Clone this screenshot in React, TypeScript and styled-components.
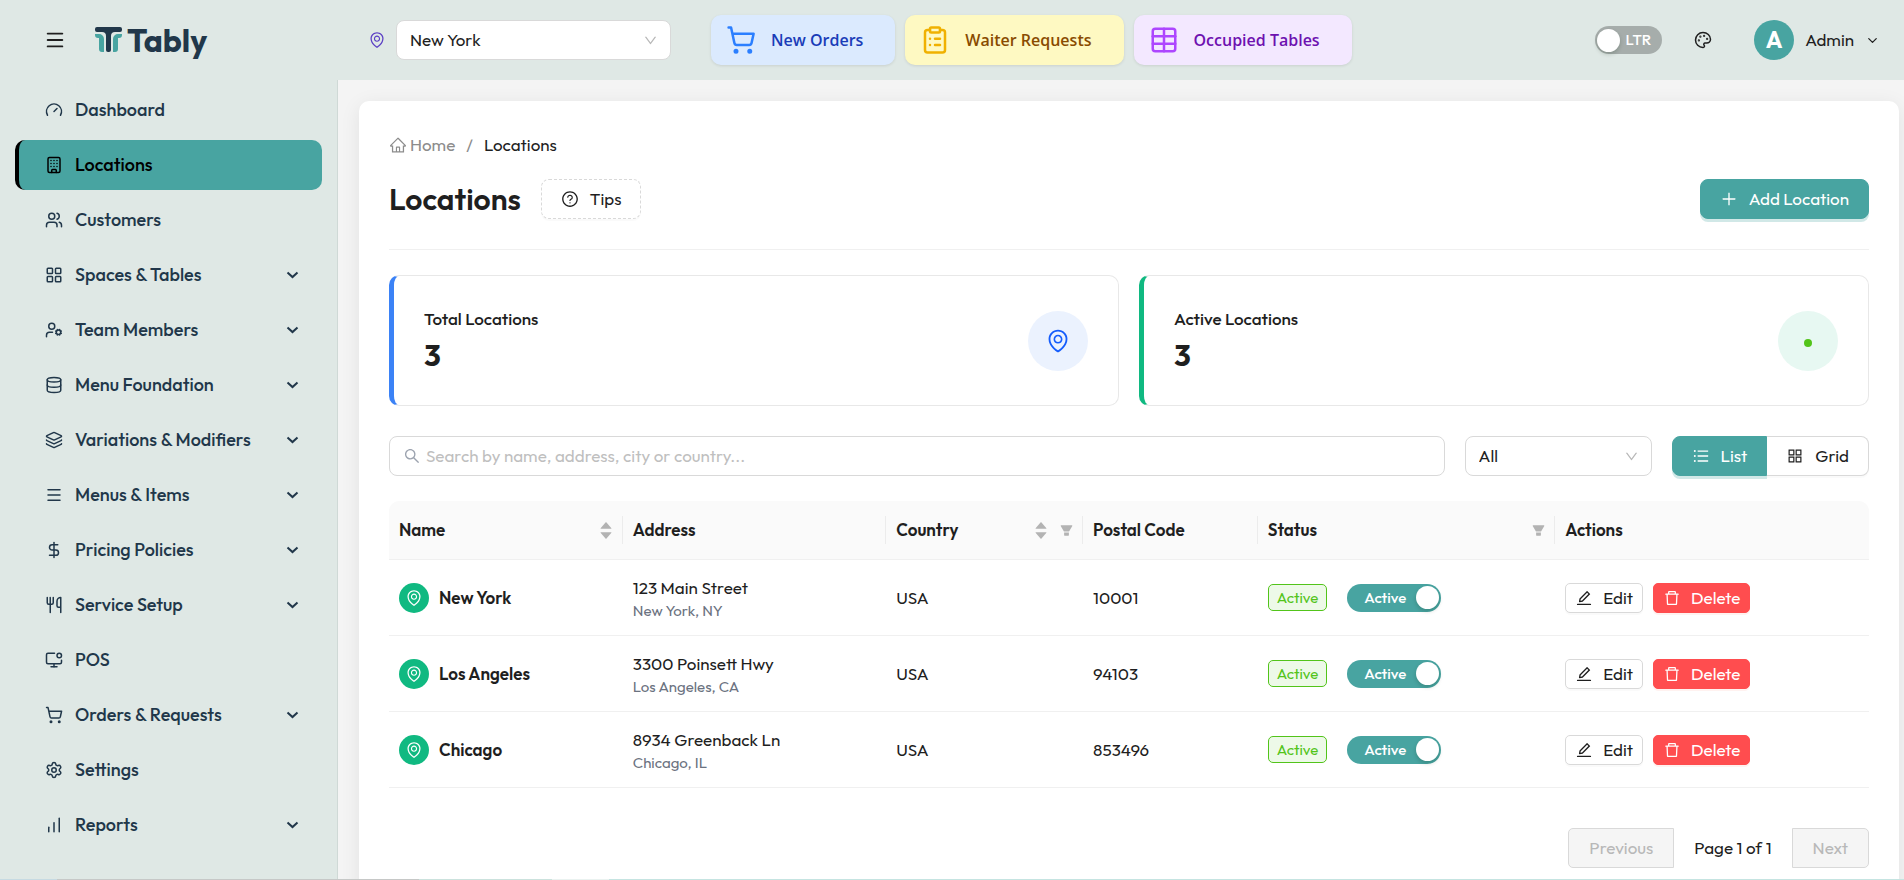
import React from "react";
import styled, { createGlobalStyle, css } from "styled-components";
import {
  Building,
  ChartNoAxesColumnIncreasing,
  ChevronDown,
  ClipboardList,
  Database,
  DollarSign,
  Gauge,
  Layers,
  LayoutGrid,
  Menu as MenuIcon,
  MonitorDot,
  Palette,
  Settings,
  ShoppingCart,
  Table as TableIcon,
  UserCog,
  Users,
  Utensils,
} from "lucide-react";
import {
  AiFillCaretDown,
  AiFillCaretUp,
  AiFillFilter,
  AiOutlineAppstore,
  AiOutlineDelete,
  AiOutlineDown,
  AiOutlineEdit,
  AiOutlineEnvironment,
  AiOutlineHome,
  AiOutlinePlus,
  AiOutlineQuestionCircle,
  AiOutlineSearch,
  AiOutlineUnorderedList,
} from "react-icons/ai";

const teal = "#48a4a1";
const navy = "#21374a";
const ink = "#1f1f1f";
const line = "#d9d9d9";
const hairline = "#f0f0f0";
const mist = "#dfe8e5";

const GlobalStyle = createGlobalStyle`
  *, *::before, *::after { box-sizing: border-box; }
  body {
    margin: 0;
    color: ${ink};
    background: #f4f4f4;
    font-family: Outfit, Lato, sans-serif;
    font-size: 17px;
    line-height: 26px;
  }
  button, input, select { font: inherit; color: inherit; }
  button { cursor: pointer; }
  svg { flex: none; display: block; }
`;

/* ---------- shell ---------- */

const Shell = styled.div`
  display: flex;
  flex-direction: column;
  height: 100vh;
  overflow: hidden;
`;

const Header = styled.header`
  display: flex;
  align-items: center;
  flex: none;
  height: 80px;
  padding: 0 24px 0 43px;
  background: ${mist};
`;

const Body = styled.div`
  display: flex;
  flex: 1;
  min-height: 0;
`;

const Sidebar = styled.nav`
  flex: none;
  width: 338px;
  padding: 5px 15px;
  background: ${mist};
  border-right: 1px solid #cfd9d6;
  overflow: hidden;
`;

const Main = styled.main`
  flex: 1;
  min-width: 0;
  padding: 21px 5px 20px 21px;
  overflow-y: auto;
  scrollbar-width: none;
`;

const Card = styled.section`
  padding: 30px;
  background: #fff;
  border-radius: 10px;
  box-shadow: 0 4px 20px rgba(0, 0, 0, 0.08);
`;

const BottomEdge = styled.div`
  position: fixed;
  inset: auto 0 0 0;
  height: 1px;
  background: linear-gradient(90deg, #c6dae2 0 3%, #c6c8c7 3% 22%, #cbe2dd 22% 29%, #eaf2f0 29% 32%, #c5e4e1 32%);
`;

/* ---------- header ---------- */

const IconButton = styled.button`
  display: flex;
  align-items: center;
  justify-content: center;
  width: 24px;
  height: 24px;
  padding: 0;
  border: 0;
  background: none;
`;

const Brand = styled.a`
  display: flex;
  align-items: center;
  gap: 5px;
  width: 240px;
  margin-left: 28px;
  color: ${navy};
  font-size: 32px;
  font-weight: 700;
  line-height: 40px;
  text-decoration: none;
`;

const LocationPicker = styled.label`
  display: flex;
  align-items: center;
  gap: 10px;
  margin-left: 33px;
  color: #5b3fc4;
`;

const SelectBox = styled.span<{ $width: number }>`
  display: grid;
  align-items: center;
  width: ${(p) => p.$width}px;
  height: 40px;
  color: #b8b8b8;
  > * { grid-area: 1 / 1; }
  svg { justify-self: end; margin-right: 13px; pointer-events: none; }
`;

const Select = styled.select`
  width: 100%;
  height: 100%;
  padding: 0 36px 0 13px;
  appearance: none;
  color: ${ink};
  background: #fff;
  border: 1px solid ${line};
  border-radius: 8px;
`;

const QuickLinks = styled.div`
  display: flex;
  gap: 10px;
  margin-left: 40px;
`;

const tones = {
  blue: { bg: "#dbeafe", text: "#193cb8", icon: "#2b7fff" },
  yellow: { bg: "#fef9c2", text: "#894b00", icon: "#f0b100" },
  purple: { bg: "#f3e8ff", text: "#6e11b0", icon: "#ad46ff" },
};

const QuickLink = styled.button<{ $tone: keyof typeof tones }>`
  display: flex;
  align-items: center;
  gap: 15px;
  height: 50px;
  padding: 0 32px 0 15px;
  border: 0;
  border-radius: 10px;
  font-family: "Open Sans", "Noto Sans", sans-serif;
  font-size: 16px;
  font-weight: 600;
  white-space: nowrap;
  color: ${(p) => tones[p.$tone].text};
  background: ${(p) => tones[p.$tone].bg};
  box-shadow: 0 1px 3px rgba(0, 0, 0, 0.1);
  svg { color: ${(p) => tones[p.$tone].icon}; }
`;

const HeaderTools = styled.div`
  display: flex;
  align-items: center;
  margin-left: auto;
  gap: 29px;
`;

const Account = styled.button`
  display: flex;
  align-items: center;
  gap: 11px;
  margin-left: 10px;
  padding: 0;
  border: 0;
  background: none;
`;

const Avatar = styled.span`
  width: 40px;
  height: 40px;
  border-radius: 50%;
  color: #fff;
  background: ${teal};
  font-size: 23px;
  font-weight: 700;
  line-height: 40px;
  text-align: center;
`;

/* ---------- switch ---------- */

const SwitchLabel = styled.label<{ $on: boolean }>`
  display: flex;
  align-items: center;
  justify-content: space-between;
  flex-direction: ${(p) => (p.$on ? "row" : "row-reverse")};
  width: ${(p) => (p.$on ? 94 : 67)}px;
  height: 28px;
  padding: ${(p) => (p.$on ? "0 2px 0 17px" : "0 11px 0 2px")};
  border-radius: 14px;
  color: #fff;
  background: ${(p) => (p.$on ? teal : "#a6adab")};
  font-size: 15px;
  font-weight: 500;
  cursor: pointer;
`;

const SwitchInput = styled.input`
  appearance: none;
  width: 23px;
  height: 23px;
  margin: 0;
  border-radius: 50%;
  background: #fff;
  box-shadow: 0 2px 4px rgba(0, 35, 11, 0.2);
`;

/* ---------- sidebar ---------- */

const NavList = styled.ul`
  display: grid;
  gap: 5px;
  margin: 0;
  padding: 0;
  list-style: none;
`;

const NavLink = styled.a<{ $active?: boolean }>`
  display: flex;
  align-items: center;
  height: 50px;
  padding: 0 23px 0 26px;
  border-left: 4px solid transparent;
  border-radius: 10px;
  color: ${navy};
  font-size: 18px;
  font-weight: 500;
  text-decoration: none;
  ${(p) =>
    p.$active &&
    css`
      color: #000;
      background: ${teal};
      border-left-color: #000;
    `}
`;

const NavText = styled.span`
  flex: 1;
  margin-left: 12px;
`;

/* ---------- page head ---------- */

const Breadcrumb = styled.ol`
  display: flex;
  gap: 11px;
  margin: 0;
  padding: 0;
  list-style: none;
  line-height: 28px;
  color: #8c8c8c;
`;

const HomeLink = styled.a`
  display: flex;
  align-items: center;
  gap: 3px;
  color: inherit;
  text-decoration: none;
`;

const Current = styled.span`
  color: ${ink};
`;

const TitleBar = styled.div`
  display: flex;
  align-items: center;
  gap: 20px;
  padding: 20px 0 30px;
  margin-bottom: 25px;
  border-bottom: 1px solid ${hairline};
`;

const Title = styled.h1`
  margin: 0;
  font-size: 30px;
  font-weight: 600;
  line-height: 40px;
`;

const Button = styled.button<{ $kind?: "primary" | "dashed" | "danger"; $small?: boolean }>`
  display: flex;
  align-items: center;
  justify-content: center;
  gap: ${(p) => (p.$small ? 10 : 11)}px;
  height: ${(p) => (p.$small ? 30 : 40)}px;
  padding: 0 ${(p) => (p.$small ? 9 : 19)}px;
  border: 1px solid ${line};
  border-radius: ${(p) => (p.$small ? 5 : 8)}px;
  background: #fff;
  box-shadow: 0 2px 0 rgba(0, 0, 0, 0.02);
  white-space: nowrap;
  ${(p) => p.$kind === "dashed" && "border-style: dashed;"}
  ${(p) =>
    p.$kind === "primary" &&
    css`
      color: #fff;
      background: ${teal};
      border-color: ${teal};
      box-shadow: 0 3px 0 rgba(72, 164, 161, 0.25);
    `}
  ${(p) =>
    p.$kind === "danger" &&
    css`
      color: #fff;
      background: #ff4d4f;
      border-color: #ff4d4f;
      box-shadow: 0 2px 0 rgba(255, 38, 5, 0.06);
    `}
`;

const TitleAction = styled.div`
  margin-left: auto;
`;

/* ---------- stats ---------- */

const Stats = styled.div`
  display: grid;
  grid-template-columns: 1fr 1fr;
  gap: 20px;
`;

const Stat = styled.article<{ $accent: string }>`
  display: flex;
  align-items: center;
  justify-content: space-between;
  height: 131px;
  padding: 0 30px;
  border: 1px solid #e8e8e8;
  border-left: 5px solid ${(p) => p.$accent};
  border-radius: 10px;
`;

const StatLabel = styled.h2`
  margin: 0;
  font-size: 17px;
  font-weight: 500;
  line-height: 28px;
`;

const StatValue = styled.p`
  margin: 0;
  font-size: 30px;
  font-weight: 700;
  line-height: 44px;
`;

const Disc = styled.span<{ $size: number; $bg: string; $color: string }>`
  display: flex;
  flex: none;
  align-items: center;
  justify-content: center;
  width: ${(p) => p.$size}px;
  height: ${(p) => p.$size}px;
  border-radius: 50%;
  color: ${(p) => p.$color};
  background: ${(p) => p.$bg};
`;

const Dot = styled.i`
  width: 8px;
  height: 8px;
  margin-top: 4px;
  border-radius: 50%;
  background: #52c41a;
`;

/* ---------- filters ---------- */

const Filters = styled.div`
  display: flex;
  gap: 20px;
  margin: 30px 0 25px;
`;

const SearchBox = styled.label`
  display: flex;
  align-items: center;
  gap: 5px;
  flex: 1;
  height: 40px;
  padding: 0 13px;
  border: 1px solid ${line};
  border-radius: 8px;
  color: #9ca3af;
`;

const SearchInput = styled.input`
  flex: 1;
  min-width: 0;
  padding: 0;
  border: 0;
  outline: 0;
  background: none;
  color: ${ink};
  &::placeholder { color: #bfbfbf; opacity: 1; }
`;

const Segmented = styled.div`
  display: flex;
  ${Button}:first-child { border-radius: 8px 0 0 8px; }
  ${Button}:last-child { border-radius: 0 8px 8px 0; border-left: 0; }
`;

/* ---------- table ---------- */

const DataTable = styled.table`
  width: 100%;
  border-collapse: separate;
  border-spacing: 0;
  table-layout: fixed;
  text-align: left;
`;

const Col = styled.col<{ $share: number }>`
  width: ${(p) => p.$share}%;
`;

const HeadCell = styled.th`
  height: 59px;
  padding: 0;
  background: #fafafa;
  border-bottom: 1px solid ${hairline};
  font-weight: 600;
  &:first-child { border-top-left-radius: 10px; }
  &:last-child { border-top-right-radius: 10px; }
`;

const HeadInner = styled.div<{ $last: boolean }>`
  display: flex;
  align-items: center;
  gap: 10px;
  height: 28px;
  padding: 0 8px 0 10px;
  border-right: 1px solid ${(p) => (p.$last ? "transparent" : "#ececec")};
  color: #b3b3b3;
`;

const HeadText = styled.span`
  flex: 1;
  color: ${ink};
`;

const Sorter = styled.span`
  display: grid;
  gap: 1px;
  svg { height: 9px; }
`;

const Cell = styled.td`
  height: 76px;
  padding: 0 10px;
  border-bottom: 1px solid ${hairline};
`;

const Inline = styled.div<{ $gap: number }>`
  display: flex;
  align-items: center;
  gap: ${(p) => p.$gap}px;
`;

const Name = styled.span`
  font-weight: 600;
`;

const SubText = styled.div`
  color: #6b7280;
  font-size: 15px;
  line-height: 20px;
`;

const Tag = styled.span`
  height: 27px;
  padding: 0 8px;
  border: 1px solid #52c41a;
  border-radius: 5px;
  background: #edf9e8;
  color: #52c41a;
  font-size: 15px;
  line-height: 25px;
`;

const Pager = styled.div`
  display: flex;
  align-items: center;
  justify-content: flex-end;
  gap: 20px;
  margin-top: 40px;
`;

const PageButton = styled.button<{ $side: "left" | "right" }>`
  height: 40px;
  padding: 0 20px;
  border: 1px solid ${line};
  border-radius: ${(p) => (p.$side === "left" ? "5px 0 0 5px" : "0 5px 5px 0")};
  color: #b8b8b8;
  background: #f5f5f5;
`;

/* ---------- pieces ---------- */

function LogoMark() {
  return (
    <svg width="27" height="26" viewBox="0 0 27 26" aria-hidden="true">
      <path fill={teal} d="M0 7h4a5 5 0 0 1 5 5v13H7a3 3 0 0 1-3-3V11H3a3 3 0 0 1-3-3z" />
      <path fill={teal} d="M27 7h-4a5 5 0 0 0-5 5v13h2a3 3 0 0 0 3-3V11h1a3 3 0 0 0 3-3z" />
      <path
        fill={navy}
        d="M2 0h23a2 2 0 0 1 2 2v1a2 2 0 0 1-2 2h-5a4 4 0 0 0-4 4v14a2 2 0 0 1-2 2h-1a2 2 0 0 1-2-2V9a4 4 0 0 0-4-4H2a2 2 0 0 1-2-2V2a2 2 0 0 1 2-2z"
      />
    </svg>
  );
}

function NavChevron() {
  return (
    <svg width="13" height="9" viewBox="0 0 13 9" fill="none" stroke="currentColor" strokeWidth="2" aria-hidden="true">
      <path d="M1.5 1.5l5 4.6 5-4.6" />
    </svg>
  );
}

function Switch({ text, on }: { text: string; on: boolean }) {
  const [checked, setChecked] = React.useState(on);
  return (
    <SwitchLabel $on={checked}>
      {text}
      <SwitchInput type="checkbox" role="switch" checked={checked} onChange={(e) => setChecked(e.target.checked)} />
    </SwitchLabel>
  );
}

const nav = [
  { text: "Dashboard", Icon: Gauge },
  { text: "Locations", Icon: Building, active: true },
  { text: "Customers", Icon: Users },
  { text: "Spaces & Tables", Icon: LayoutGrid, more: true },
  { text: "Team Members", Icon: UserCog, more: true },
  { text: "Menu Foundation", Icon: Database, more: true },
  { text: "Variations & Modifiers", Icon: Layers, more: true },
  { text: "Menus & Items", Icon: MenuIcon, more: true },
  { text: "Pricing Policies", Icon: DollarSign, more: true },
  { text: "Service Setup", Icon: Utensils, more: true },
  { text: "POS", Icon: MonitorDot },
  { text: "Orders & Requests", Icon: ShoppingCart, more: true },
  { text: "Settings", Icon: Settings },
  { text: "Reports", Icon: ChartNoAxesColumnIncreasing, more: true },
];

const columns = [
  { text: "Name", share: 15.8, sort: true },
  { text: "Address", share: 17.8 },
  { text: "Country", share: 13.3, sort: true, filter: true },
  { text: "Postal Code", share: 11.8 },
  { text: "Status", share: 20.1, filter: true },
  { text: "Actions", share: 21.2 },
];

const rows = [
  { name: "New York", street: "123 Main Street", city: "New York, NY", country: "USA", zip: "10001" },
  { name: "Los Angeles", street: "3300 Poinsett Hwy", city: "Los Angeles, CA", country: "USA", zip: "94103" },
  { name: "Chicago", street: "8934 Greenback Ln", city: "Chicago, IL", country: "USA", zip: "853496" },
];

export default function App() {
  return (
    <Shell>
      <GlobalStyle />
      <Header>
        <IconButton aria-label="Toggle menu">
          <MenuIcon size={22} />
        </IconButton>
        <Brand href="#">
          <LogoMark />
          Tably
        </Brand>
        <LocationPicker>
          <AiOutlineEnvironment size={18} />
          <SelectBox $width={275}>
            <Select aria-label="Location" defaultValue="New York">
              {rows.map((r) => (
                <option key={r.name}>{r.name}</option>
              ))}
            </Select>
            <AiOutlineDown size={15} />
          </SelectBox>
        </LocationPicker>
        <QuickLinks>
          <QuickLink $tone="blue">
            <ShoppingCart size={30} />
            New Orders
          </QuickLink>
          <QuickLink $tone="yellow">
            <ClipboardList size={30} />
            Waiter Requests
          </QuickLink>
          <QuickLink $tone="purple">
            <TableIcon size={30} />
            Occupied Tables
          </QuickLink>
        </QuickLinks>
        <HeaderTools>
          <Switch text="LTR" on={false} />
          <IconButton aria-label="Theme">
            <Palette size={18} />
          </IconButton>
          <Account>
            <Avatar>A</Avatar>
            Admin
            <ChevronDown size={15} />
          </Account>
        </HeaderTools>
      </Header>

      <Body>
        <Sidebar aria-label="Main">
          <NavList>
            {nav.map(({ text, Icon, active, more }) => (
              <li key={text}>
                <NavLink href="#" $active={active} aria-current={active ? "page" : undefined}>
                  <Icon size={18} strokeWidth={2} />
                  <NavText>{text}</NavText>
                  {more && <NavChevron />}
                </NavLink>
              </li>
            ))}
          </NavList>
        </Sidebar>

        <Main>
          <Card>
            <Breadcrumb>
              <li>
                <HomeLink href="#">
                  <AiOutlineHome size={18} />
                  Home
                </HomeLink>
              </li>
              <li aria-hidden="true">/</li>
              <li>
                <Current>Locations</Current>
              </li>
            </Breadcrumb>

            <TitleBar>
              <Title>Locations</Title>
              <Button $kind="dashed">
                <AiOutlineQuestionCircle size={18} />
                Tips
              </Button>
              <TitleAction>
                <Button $kind="primary">
                  <AiOutlinePlus size={18} />
                  Add Location
                </Button>
              </TitleAction>
            </TitleBar>

            <Stats>
              <Stat $accent="#3b82f6">
                <div>
                  <StatLabel>Total Locations</StatLabel>
                  <StatValue>3</StatValue>
                </div>
                <Disc $size={60} $bg="#ebf2fe" $color="#155dfc">
                  <AiOutlineEnvironment size={26} />
                </Disc>
              </Stat>
              <Stat $accent="#10b981">
                <div>
                  <StatLabel>Active Locations</StatLabel>
                  <StatValue>3</StatValue>
                </div>
                <Disc $size={60} $bg="#e7f8f2" $color="#52c41a">
                  <Dot />
                </Disc>
              </Stat>
            </Stats>

            <Filters>
              <SearchBox>
                <AiOutlineSearch size={18} />
                <SearchInput type="text" aria-label="Search" placeholder="Search by name, address, city or country..." />
              </SearchBox>
              <SelectBox $width={187}>
                <Select aria-label="Status filter" defaultValue="All">
                  <option>All</option>
                  <option>Active</option>
                </Select>
                <AiOutlineDown size={15} />
              </SelectBox>
              <Segmented>
                <Button $kind="primary">
                  <AiOutlineUnorderedList size={18} />
                  List
                </Button>
                <Button>
                  <AiOutlineAppstore size={18} />
                  Grid
                </Button>
              </Segmented>
            </Filters>

            <DataTable>
              <colgroup>
                {columns.map((c) => (
                  <Col key={c.text} $share={c.share} />
                ))}
              </colgroup>
              <thead>
                <tr>
                  {columns.map((c, i) => (
                    <HeadCell key={c.text} scope="col">
                      <HeadInner $last={i === columns.length - 1}>
                        <HeadText>{c.text}</HeadText>
                        {c.sort && (
                          <Sorter>
                            <AiFillCaretUp size={16} preserveAspectRatio="xMidYMid slice" />
                            <AiFillCaretDown size={16} preserveAspectRatio="xMidYMid slice" />
                          </Sorter>
                        )}
                        {c.filter && <AiFillFilter size={15} />}
                      </HeadInner>
                    </HeadCell>
                  ))}
                </tr>
              </thead>
              <tbody>
                {rows.map((r) => (
                  <tr key={r.name}>
                    <Cell>
                      <Inline $gap={10}>
                        <Disc $size={30} $bg="#10b981" $color="#fff">
                          <AiOutlineEnvironment size={18} />
                        </Disc>
                        <Name>{r.name}</Name>
                      </Inline>
                    </Cell>
                    <Cell>
                      <div>{r.street}</div>
                      <SubText>{r.city}</SubText>
                    </Cell>
                    <Cell>{r.country}</Cell>
                    <Cell>{r.zip}</Cell>
                    <Cell>
                      <Inline $gap={20}>
                        <Tag>Active</Tag>
                        <Switch text="Active" on />
                      </Inline>
                    </Cell>
                    <Cell>
                      <Inline $gap={10}>
                        <Button $small>
                          <AiOutlineEdit size={18} />
                          Edit
                        </Button>
                        <Button $small $kind="danger">
                          <AiOutlineDelete size={18} />
                          Delete
                        </Button>
                      </Inline>
                    </Cell>
                  </tr>
                ))}
              </tbody>
            </DataTable>

            <Pager>
              <PageButton $side="left" disabled>
                Previous
              </PageButton>
              <span>Page 1 of 1</span>
              <PageButton $side="right" disabled>
                Next
              </PageButton>
            </Pager>
          </Card>
        </Main>
      </Body>
      <BottomEdge />
    </Shell>
  );
}
